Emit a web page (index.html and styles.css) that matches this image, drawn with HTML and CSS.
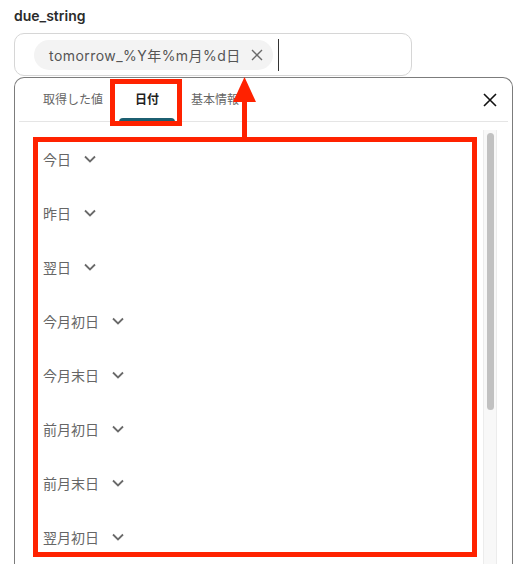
FILE: index.html
```html
<!DOCTYPE html>
<html lang="ja">
<head>
    <meta charset="UTF-8">
    <meta name="viewport" content="width=device-width, initial-scale=1.0">
    <title>due_string</title>
    <link rel="stylesheet" href="styles.css">
</head>
<body>
    <div class="field">
        <div class="label">due_string</div>
        <div class="input">
            <span class="chip">
                <span class="chip-text">tomorrow_%Y年%m月%d日</span>
                <svg class="chip-close" width="12" height="12" viewBox="0 0 12 12"><path d="M1 1 L11 11 M11 1 L1 11" /></svg>
            </span>
            <span class="caret"></span>
        </div>

        <div class="popup">
            <div class="tabs">
                <div class="tab">取得した値</div>
                <div class="tab active">日付</div>
                <div class="tab">基本情報</div>
                <svg class="close" width="16" height="16" viewBox="0 0 16 16"><path d="M2 2 L14 14 M14 2 L2 14" /></svg>
            </div>
            <div class="panel">
                <ul class="list">
                    <li class="item">今日 <svg class="chev" width="12" height="8" viewBox="0 0 12 8"><path d="M1 1.5 L6 6.5 L11 1.5" /></svg></li>
                    <li class="item">昨日 <svg class="chev" width="12" height="8" viewBox="0 0 12 8"><path d="M1 1.5 L6 6.5 L11 1.5" /></svg></li>
                    <li class="item">翌日 <svg class="chev" width="12" height="8" viewBox="0 0 12 8"><path d="M1 1.5 L6 6.5 L11 1.5" /></svg></li>
                    <li class="item">今月初日 <svg class="chev" width="12" height="8" viewBox="0 0 12 8"><path d="M1 1.5 L6 6.5 L11 1.5" /></svg></li>
                    <li class="item">今月末日 <svg class="chev" width="12" height="8" viewBox="0 0 12 8"><path d="M1 1.5 L6 6.5 L11 1.5" /></svg></li>
                    <li class="item">前月初日 <svg class="chev" width="12" height="8" viewBox="0 0 12 8"><path d="M1 1.5 L6 6.5 L11 1.5" /></svg></li>
                    <li class="item">前月末日 <svg class="chev" width="12" height="8" viewBox="0 0 12 8"><path d="M1 1.5 L6 6.5 L11 1.5" /></svg></li>
                    <li class="item">翌月初日 <svg class="chev" width="12" height="8" viewBox="0 0 12 8"><path d="M1 1.5 L6 6.5 L11 1.5" /></svg></li>
                </ul>
                <div class="scrollbar"><div class="thumb"></div></div>
            </div>
        </div>
    </div>

    <!-- annotations drawn over the screenshot -->
    <div class="mark mark-tab"></div>
    <div class="mark mark-list"></div>
    <svg class="arrow" width="30" height="66" viewBox="0 0 30 66">
        <polygon points="11.5,0 0,25 23,25" />
        <rect x="9" y="20" width="5" height="45" />
    </svg>
</body>
</html>
```

FILE: styles.css
```css
* {
    padding: 0;
    margin: 0;
    box-sizing: border-box;
}

body {
    font-family: Inter, "Noto Sans CJK JP", sans-serif;
    background-color: #ffffff;
    overflow: hidden;
    height: 564px;
}

.field {
    padding: 6px 0 0 14px;
}

.label {
    font-size: 14px;
    font-weight: 600;
    line-height: 20px;
    color: #2b2b2b;
    margin-bottom: 7px;
}

.input {
    width: 398px;
    height: 43px;
    border: 1px solid #d6d6d6;
    border-radius: 10px;
    display: flex;
    align-items: center;
    padding-left: 19px;
}

.chip {
    display: flex;
    align-items: center;
    height: 30px;
    padding: 0 10px 0 15px;
    background-color: #f3f3f3;
    border-radius: 15px;
    font-size: 14px;
    color: #555555;
}

.chip-text {
    letter-spacing: 0.45px;
}

.chip-close {
    margin-left: 10px;
}

.chip-close path {
    stroke: #6a6a6a;
    stroke-width: 1.4;
    fill: none;
}

.caret {
    width: 1px;
    height: 32px;
    background-color: #333333;
    margin-left: 5px;
}

.popup {
    margin-top: 1px;
    width: 499px;
    height: 487px;
    border: 1px solid #7c7c7c;
    border-bottom: none;
    border-radius: 10px 10px 0 0;
}

.tabs {
    display: flex;
    align-items: stretch;
    height: 44px;
    margin: 0 4px;
    padding-left: 8px;
    border-bottom: 1px solid #e5e5e5;
}

.tab {
    position: relative;
    padding: 0 16px;
    font-size: 12px;
    line-height: 44px;
    color: #666666;
}

.tab.active {
    color: #1f1f1f;
    font-weight: 700;
}

.tab.active::after {
    content: "";
    position: absolute;
    left: 0;
    right: 0;
    bottom: -1px;
    height: 4px;
    border-radius: 4px 4px 0 0;
    background-color: #1c5f71;
}

.close {
    margin-left: auto;
    margin-right: 10px;
    align-self: center;
}

.close path {
    stroke: #111111;
    stroke-width: 1.6;
    fill: none;
}

.panel {
    display: flex;
    margin-top: 8px;
    height: 434px;
    overflow: hidden;
}

.list {
    list-style: none;
    flex: 1;
    padding: 2px 0 0 28px;
}

.item {
    display: flex;
    align-items: center;
    height: 54px;
    font-size: 14px;
    color: #666666;
}

.chev {
    margin-left: 13px;
}

.chev path {
    stroke: #6a6a6a;
    stroke-width: 1.8;
    fill: none;
}

.scrollbar {
    width: 14px;
    height: 434px;
    margin-right: 15px;
    background-color: #f8f8f8;
    border-left: 1px solid #ececec;
    border-right: 1px solid #ececec;
    padding: 3px 2px 0 3px;
}

.thumb {
    height: 277px;
    border-radius: 4px;
    background-color: #c1c1c1;
}

.mark {
    position: absolute;
    border: 5px solid #ff2200;
}

.mark-tab {
    left: 110px;
    top: 79px;
    width: 72px;
    height: 47px;
}

.mark-list {
    left: 33px;
    top: 137px;
    width: 444px;
    height: 420px;
}

.arrow {
    position: absolute;
    left: 233px;
    top: 77px;
}

.arrow polygon,
.arrow rect {
    fill: #ff2200;
}
```
